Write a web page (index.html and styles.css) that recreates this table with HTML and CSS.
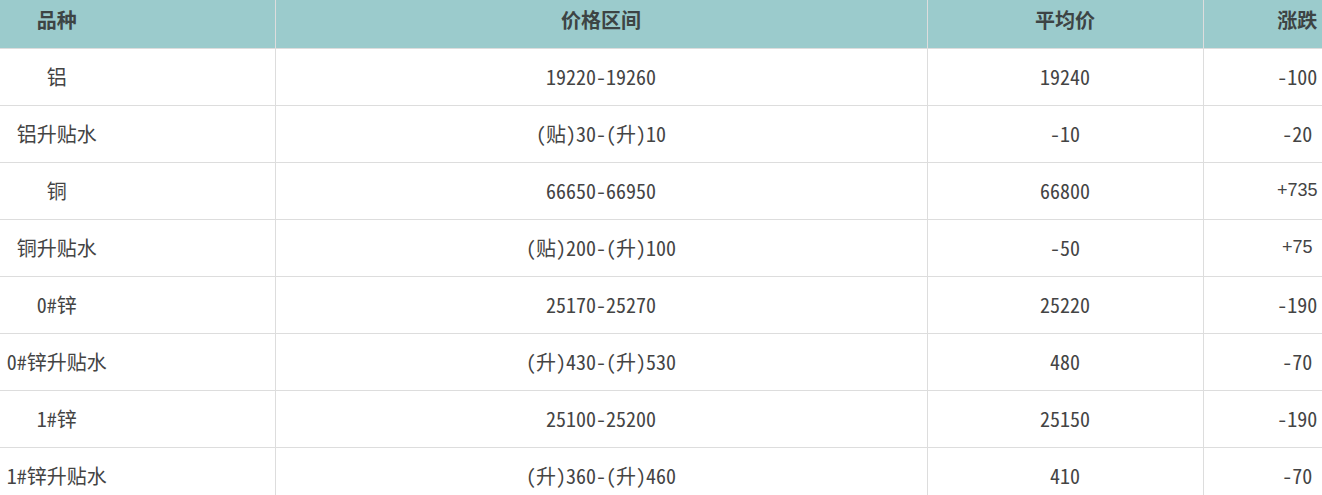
FILE: index.html
```html
<!DOCTYPE html>
<html lang="zh-CN">
<head>
<meta charset="utf-8">
<link rel="stylesheet" href="styles.css">
</head>
<body>
<div class="viewport">
<table class="price">
  <colgroup>
    <col class="c1"><col class="c2"><col class="c3"><col class="c4">
  </colgroup>
  <thead>
    <tr><th>品种</th><th>价格区间</th><th>平均价</th><th>涨跌</th></tr>
  </thead>
  <tbody>
    <tr><td>铝</td><td>19220-19260</td><td>19240</td><td>-100</td></tr>
    <tr><td>铝升贴水</td><td>(贴)30-(升)10</td><td>-10</td><td>-20</td></tr>
    <tr><td>铜</td><td>66650-66950</td><td>66800</td><td class="sans">+735</td></tr>
    <tr><td>铜升贴水</td><td>(贴)200-(升)100</td><td>-50</td><td class="sans">+75</td></tr>
    <tr><td>0#锌</td><td>25170-25270</td><td>25220</td><td>-190</td></tr>
    <tr><td>0#锌升贴水</td><td>(升)430-(升)530</td><td>480</td><td>-70</td></tr>
    <tr><td>1#锌</td><td>25100-25200</td><td>25150</td><td>-190</td></tr>
    <tr><td>1#锌升贴水</td><td>(升)360-(升)460</td><td>410</td><td>-70</td></tr>
  </tbody>
</table>
</div>
</body>
</html>
```
FILE: styles.css
```css
html, body {
  margin: 0;
  padding: 0;
  background: #fff;
}
.viewport {
  width: 1322px;
  height: 495px;
  overflow: hidden;
}
.price {
  margin-left: -161px;
  width: 1552px;
  border-collapse: collapse;
  table-layout: fixed;
  font-family: "Noto Sans Mono CJK SC", "Liberation Mono", "Noto Sans CJK SC", monospace;
  font-size: 20px;
  color: #444;
}
.c1 { width: 436px; }
.c2 { width: 652px; }
.c3 { width: 276px; }
.c4 { width: 188px; }
.price th {
  background: #9bcbcc;
  height: 48px;
  padding: 0 0 8px 0;
  box-sizing: border-box;
  font-weight: bold;
  color: #3d4444;
  text-align: center;
  border-left: 1px solid #ddd;
  border-bottom: 1px solid #ddd;
  line-height: 24px;
}
.price td {
  height: 57px;
  padding: 0;
  box-sizing: border-box;
  text-align: center;
  border-left: 1px solid #ddd;
  border-bottom: 1px solid #ddd;
  font-weight: normal;
  color: #444;
}
.price th:first-child, .price td:first-child { border-left: none; }
.price td.sans {
  font-family: "Liberation Sans", Arial, sans-serif;
  font-size: 18px;
}
```
